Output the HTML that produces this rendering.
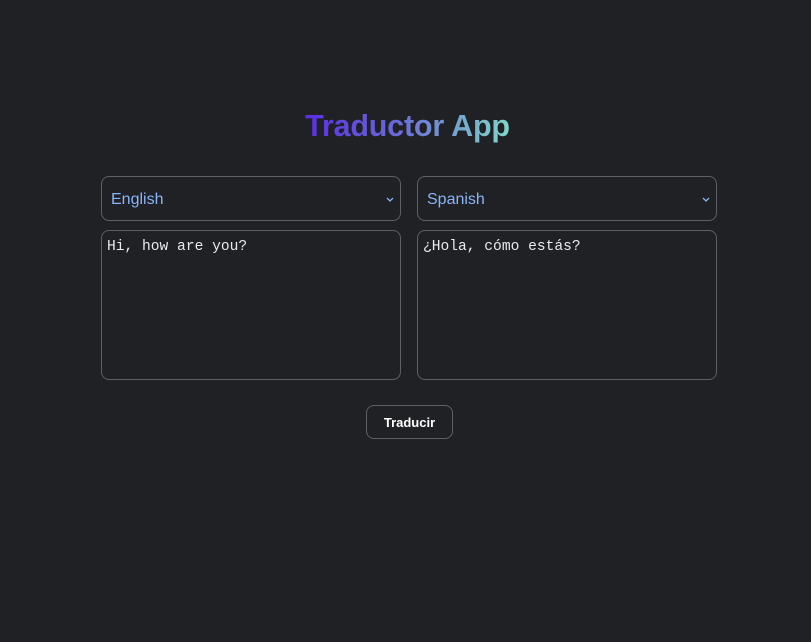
<!DOCTYPE html>
<html><head><meta charset="utf-8"><style>
*{box-sizing:border-box;margin:0;padding:0}
body{width:811px;height:642px;background:#202124;font-family:"Liberation Sans",sans-serif;position:relative;overflow:hidden}
h1{position:absolute;left:2px;width:811px;top:107px;text-align:center;font-size:30.5px;font-weight:bold;line-height:38px;letter-spacing:-0.2px}
h1 span{background:linear-gradient(90deg,#5b2de6 0%,#6a6ad8 45%,#7fd8c8 100%);-webkit-background-clip:text;background-clip:text;color:transparent}
.sel{position:absolute;top:176px;width:300px;height:45px;border:1px solid #5f6063;border-radius:8px;color:#8ab4f8;font-size:16px;padding:14px 9px}
.sel svg{position:absolute;right:5px;top:19px}
.ta{position:absolute;top:230px;width:300px;height:150px;border:1px solid #5f6063;border-radius:8px;color:#e8eaed;font-family:"Liberation Mono",monospace;font-size:14.6px;padding:8px 5px}
.btn{position:absolute;left:366px;top:405px;width:87px;height:34px;border:1px solid #5f6063;border-radius:8px;color:#fff;font-weight:bold;font-size:13px;text-align:center;line-height:33px}
</style></head><body>
<h1><span>Traductor App</span></h1>
<div class="sel" style="left:101px">English<svg width="10" height="7" viewBox="0 0 10 7"><path d="M2 2L5 5L8 2" stroke="#8ab4f8" stroke-width="1.3" fill="none"/></svg></div>
<div class="sel" style="left:417px">Spanish<svg width="10" height="7" viewBox="0 0 10 7"><path d="M2 2L5 5L8 2" stroke="#8ab4f8" stroke-width="1.3" fill="none"/></svg></div>
<div class="ta" style="left:101px">Hi, how are you?</div>
<div class="ta" style="left:417px">¿Hola, cómo estás?</div>
<div class="btn">Traducir</div>
</body></html>
